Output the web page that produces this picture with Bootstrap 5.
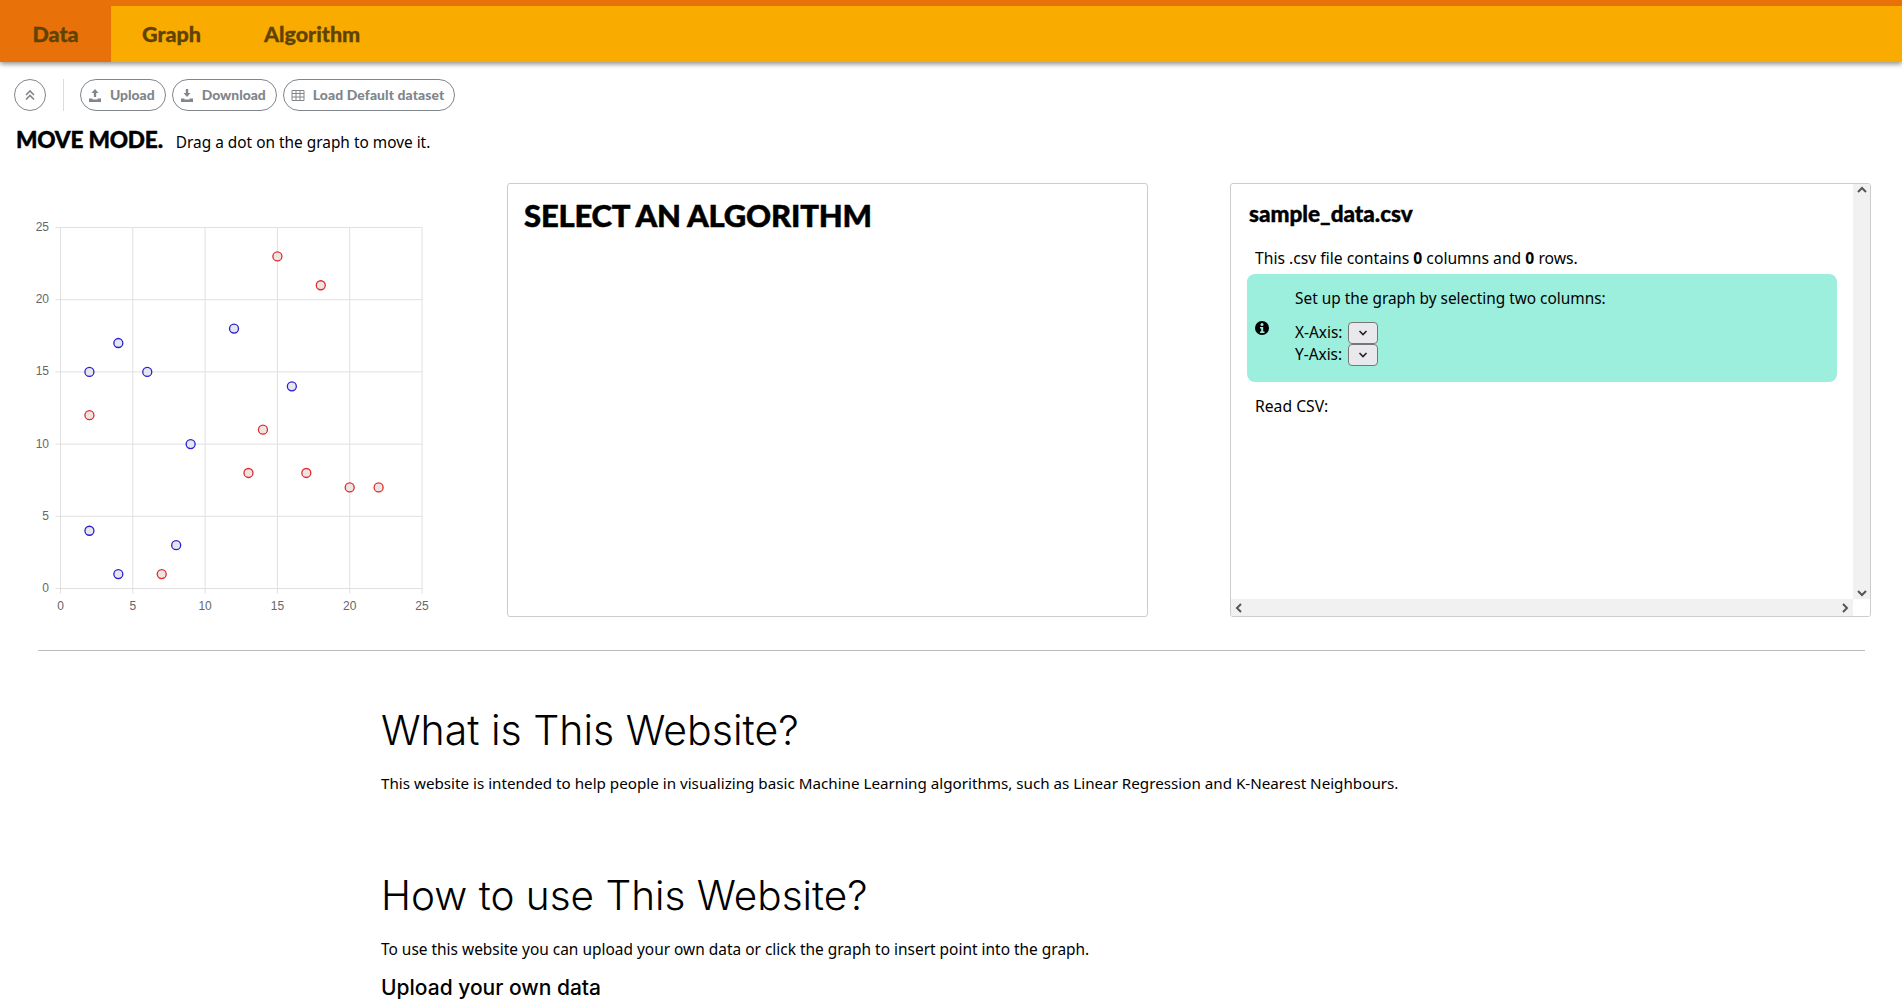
<!DOCTYPE html>
<html lang="en">
<head>
<meta charset="utf-8">
<title>Visualizer</title>
<link href="https://cdn.jsdelivr.net/npm/bootstrap@5.3.0/dist/css/bootstrap.min.css" rel="stylesheet">
<style>
html,body{height:1003px;overflow:hidden}
body{font-family:"Noto Sans","DejaVu Sans",sans-serif;font-size:15.2px;color:#000;background:#fff}
.topbar{height:62px;background:#f9ab00;border-top:6px solid #e8710a;box-shadow:0 2px 5px rgba(0,0,0,.45)}
.tab{font-family:Lato,sans-serif;font-weight:900;font-size:21.5px;color:#5f4300;text-decoration:none;display:flex;align-items:center;height:56px;-webkit-text-stroke:.3px #5f4300}
.tab-on{background:#e8710a;width:111px;justify-content:center}
.tab-a{margin-left:31px}
.tab-b{margin-left:63px}
.tools{padding:17px 14px 0;height:49px}
.round{width:32px;height:32px;border:1px solid #80868b;border-radius:50%;background:#fff;padding:0;display:flex;align-items:center;justify-content:center}
.vsep{width:1px;height:32px;background:#dadce0;margin:0 16px 0 17px}
.pill{height:32px;border:1px solid #80868b;border-radius:16px;background:#fff;padding:0 10px 0 7px;display:flex;align-items:center;gap:8px;font-family:Lato,sans-serif;font-weight:900;font-size:13.9px;color:#80868b;margin-right:6px;white-space:nowrap}
.pill-wide{letter-spacing:.12px}
.modeline{padding:12px 16px 0;height:46px;display:flex;align-items:baseline}
.modeline b{font-family:Lato,sans-serif;font-weight:900;font-size:22.6px;margin-right:13px;letter-spacing:-.2px;-webkit-text-stroke:.4px #000}
.modeline span{font-size:15.4px}
.panels{display:flex;height:434px;margin-top:26px;padding-right:31px}
.chartcol{width:507px;flex:none}
.chartcol svg{display:block;margin-top:24px}
.box{width:641px;flex:none;height:434px;border:1px solid #ccc;border-radius:3px;background:#fff}
.gapbox{margin-left:82px}
.box h2{font-family:Lato,sans-serif;font-weight:900;font-size:31px;margin:13px 16px 0;letter-spacing:-.2px;-webkit-text-stroke:.5px #000}
.scrollwrap{display:grid;grid-template-columns:1fr 17px;grid-template-rows:1fr 17px;overflow:hidden}
.scrollmain{padding:15px 16px 0 16px;min-width:0;overflow:hidden}
.scrollmain h3{font-family:Lato,sans-serif;font-weight:900;font-size:22.5px;margin:0 0 0 2px;line-height:30px;-webkit-text-stroke:.4px #000}
.scrollmain p{font-size:15.7px;margin:0}
.rowtxt{margin:17px 0 0 8px!important;line-height:24px}
.readcsv{margin:12px 0 0 8px!important;line-height:24px}
.note{background:#9ceedd;border-radius:8px;height:108px;width:590px;margin:4px 0 0 0;display:flex;align-items:center;padding-left:8px}
.note svg.info{flex:none}
.notebody{margin:-3px 0 0 26px;font-size:15.4px;line-height:22px}
.notebody p{line-height:22px;margin-bottom:12px;font-size:15.4px}
.axisrow{height:22px;display:flex;align-items:center;gap:6px}
.sel{display:flex;align-items:center;justify-content:center;width:30px;height:22px;border:1px solid #767676;border-radius:4px;background:#e9e9ed}
.sbar{background:#f1f1f1;display:flex;align-items:center;justify-content:space-between}
.sbar-v{flex-direction:column;padding:2px 0}
.sbar-h{padding:0 4px}
.corner{background:#fff}
.divider{height:1px;background:#bbb;margin:33px 37px 0 38px;opacity:1;border:0}
.article{padding-left:381px}
.article h2{font-family:Inter,Lato,sans-serif;font-weight:300;font-size:41px;margin:0;line-height:50px}
.article p{font-size:15.2px;margin:0}
.article .h-one{margin-top:54px}
.article .h-two{margin-top:76px;font-size:40.5px}
.article .p-one{margin-top:16px;line-height:24px}
.article .p-two{font-size:15.45px}
.article h4{font-family:Inter,Lato,sans-serif;font-weight:500;font-size:21px;margin:13px 0 0;line-height:27px}
</style>
</head>
<body>
<nav class="topbar d-flex">
  <a class="tab tab-on" href="#">Data</a>
  <a class="tab tab-a" href="#">Graph</a>
  <a class="tab tab-b" href="#">Algorithm</a>
</nav>
<div class="tools d-flex align-items-start">
  <button class="round" aria-label="Collapse"><svg width="14" height="14" viewBox="0 0 14 14" fill="none" stroke="#80868b" stroke-width="1.6"><path d="M3 7l4-4 4 4M3 11.5l4-4 4 4"/></svg></button>
  <div class="vsep"></div>
  <button class="pill"><svg width="14" height="14" viewBox="0 0 14 14" fill="#80868b"><path d="M7 1l3.500 4H8.200v4H5.800V5H3.500zM1 10.500h3.500v1h5v-1H13V14H1z"/></svg>Upload</button>
  <button class="pill"><svg width="14" height="14" viewBox="0 0 14 14" fill="#80868b"><path d="M5.800 1h2.400v4h2.300L7 9 3.500 5h2.300zM1 10.500h3.500v1h5v-1H13V14H1z"/></svg>Download</button>
  <button class="pill pill-wide"><svg width="14" height="14" viewBox="0 0 14 14" fill="none" stroke="#80868b"><path d="M1 2.500h12v10H1zM1 5.500h12M1 9h12M5 2.500v10M9 2.500v10"/></svg>Load Default dataset</button>
</div>
<div class="modeline"><b>MOVE MODE.</b><span>Drag a dot on the graph to move it.</span></div>
<div class="panels">
  <div class="chartcol">
    <svg id="chart" width="460" height="420" viewBox="0 206 460 420" role="img" aria-label="Scatter chart"></svg>
  </div>
  <div class="box"><h2>SELECT AN ALGORITHM</h2></div>
  <div class="box gapbox scrollwrap">
    <div class="scrollmain">
      <h3>sample_data.csv</h3>
      <p class="rowtxt">This .csv file contains <b>0</b> columns and <b>0</b> rows.</p>
      <div class="note">
        <svg class="info" width="14" height="14" viewBox="0 0 14 14"><circle cx="7" cy="7" r="7" fill="#000"/><circle cx="7" cy="3.500" r="1.500" fill="#9ceedd"/><path d="M5 6h3.200v4.500H9.500V12h-4.500v-1.500h1.200V7.500H5z" fill="#9ceedd"/></svg>
        <div class="notebody">
          <p>Set up the graph by selecting two columns:</p>
          <div class="axisrow">X-Axis: <span class="sel"><svg width="12" height="8" viewBox="0 0 12 8" fill="none" stroke="#222" stroke-width="1.600"><path d="M2.500 2l3.500 3.500L9.500 2"/></svg></span></div>
          <div class="axisrow">Y-Axis: <span class="sel"><svg width="12" height="8" viewBox="0 0 12 8" fill="none" stroke="#222" stroke-width="1.600"><path d="M2.500 2l3.500 3.500L9.500 2"/></svg></span></div>
        </div>
      </div>
      <p class="readcsv">Read CSV:</p>
    </div>
    <div class="sbar sbar-v">
      <svg width="10" height="8" viewBox="0 0 10 8" fill="none" stroke="#555" stroke-width="2"><path d="M1 6l4-4 4 4"/></svg>
      <svg width="10" height="8" viewBox="0 0 10 8" fill="none" stroke="#555" stroke-width="2"><path d="M1 2l4 4 4-4"/></svg>
    </div>
    <div class="sbar sbar-h">
      <svg width="8" height="10" viewBox="0 0 8 10" fill="none" stroke="#555" stroke-width="2"><path d="M6 1L2 5l4 4"/></svg>
      <svg width="8" height="10" viewBox="0 0 8 10" fill="none" stroke="#555" stroke-width="2"><path d="M2 1l4 4-4 4"/></svg>
    </div>
    <div class="corner"></div>
  </div>
</div>
<hr class="divider">
<main class="article">
  <h2 class="h-one">What is This Website?</h2>
  <p class="p-one">This website is intended to help people in visualizing basic Machine Learning algorithms, such as Linear Regression and K-Nearest Neighbours.</p>
  <h2 class="h-two">How to use This Website?</h2>
  <p class="p-one p-two">To use this website you can upload your own data or click the graph to insert point into the graph.</p>
  <h4>Upload your own data</h4>
</main>
<script src="https://cdn.jsdelivr.net/npm/bootstrap@5.3.0/dist/js/bootstrap.bundle.min.js"></script>
<script>
const s=document.getElementById('chart'),NS='http://www.w3.org/2000/svg';
const X=v=>60.5+v*14.46,Y=v=>587.5-v*14.44;
function el(n,a,t){const e=document.createElementNS(NS,n);for(const k in a)e.setAttribute(k,a[k]);if(t!==undefined)e.textContent=t;s.appendChild(e);}
for(let v=0;v<=25;v+=5){
 el('line',{x1:X(v),x2:X(v),y1:Y(25),y2:Y(0)+5,stroke:'#e0e0e0','stroke-width':1});
 el('line',{x1:X(0)-5,x2:X(25),y1:Y(v),y2:Y(v),stroke:'#e0e0e0','stroke-width':1});
 el('text',{x:X(v),y:609,'text-anchor':'middle','font-family':'Liberation Sans','font-size':12,fill:'#666'},v);
 el('text',{x:49,y:Y(v)+3.5,'text-anchor':'end','font-family':'Liberation Sans','font-size':12,fill:'#666'},v);
}
const B=[[2,15],[4,17],[6,15],[12,18],[16,14],[9,10],[2,4],[8,3],[4,1]],R=[[15,23],[18,21],[2,12],[14,11],[13,8],[17,8],[20,7],[22,7],[7,1]];
B.forEach(p=>el('circle',{cx:X(p[0]),cy:Y(p[1]),r:4.5,fill:'#e6e6ee',stroke:'#2a1fd0','stroke-width':1.3}));
R.forEach(p=>el('circle',{cx:X(p[0]),cy:Y(p[1]),r:4.5,fill:'#eee4e4',stroke:'#e02b2b','stroke-width':1.3}));
</script>
</body>
</html>
